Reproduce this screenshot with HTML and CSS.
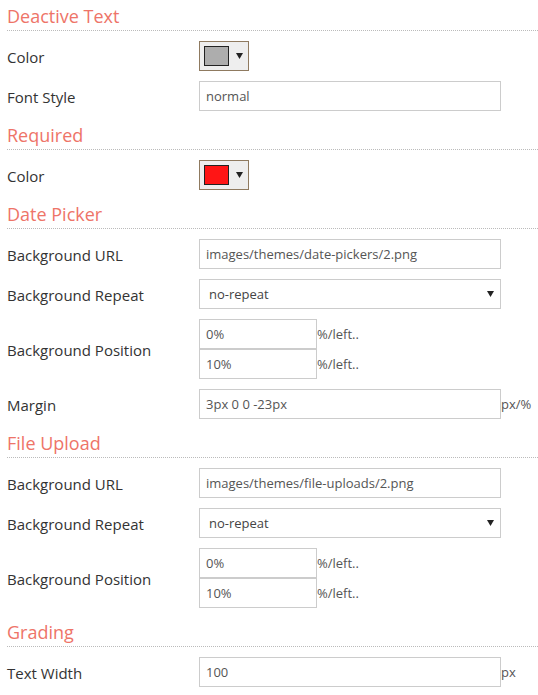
FILE: index.html
```html
<!DOCTYPE html>
<html>
<head>
<meta charset="utf-8">
<link rel="stylesheet" href="styles.css">
</head>
<body>
<div class="page">
  <h3 class="sec first">Deactive Text</h3>
  <div class="row">
    <div class="label">Color</div>
    <div class="ctrl">
      <div class="picker"><span class="swatch gray"></span><svg class="tri" width="7" height="6" viewBox="0 0 7 6"><path d="M0 0H7L3.5 6Z" fill="#222"/></svg></div>
    </div>
  </div>
  <div class="row">
    <div class="label">Font Style</div>
    <div class="ctrl"><input class="inp wide" value="normal"></div>
  </div>

  <h3 class="sec">Required</h3>
  <div class="row">
    <div class="label">Color</div>
    <div class="ctrl">
      <div class="picker"><span class="swatch red"></span><svg class="tri" width="7" height="6" viewBox="0 0 7 6"><path d="M0 0H7L3.5 6Z" fill="#222"/></svg></div>
    </div>
  </div>

  <h3 class="sec">Date Picker</h3>
  <div class="row">
    <div class="label">Background URL</div>
    <div class="ctrl"><input class="inp wide" value="images/themes/date-pickers/2.png"></div>
  </div>
  <div class="row">
    <div class="label">Background Repeat</div>
    <div class="ctrl"><div class="select wide"><span>no-repeat</span><svg width="7" height="6" viewBox="0 0 7 6"><path d="M0 0H7L3.5 6Z" fill="#222"/></svg></div></div>
  </div>
  <div class="row">
    <div class="label">Background Position</div>
    <div class="ctrl stack">
      <div class="pair"><input class="inp short" value="0%"><span class="unit">%/left..</span></div>
      <div class="pair"><input class="inp short" value="10%"><span class="unit">%/left..</span></div>
    </div>
  </div>
  <div class="row">
    <div class="label">Margin</div>
    <div class="ctrl"><input class="inp wide" value="3px 0 0 -23px"><span class="unit">px/%</span></div>
  </div>

  <h3 class="sec">File Upload</h3>
  <div class="row">
    <div class="label">Background URL</div>
    <div class="ctrl"><input class="inp wide" value="images/themes/file-uploads/2.png"></div>
  </div>
  <div class="row">
    <div class="label">Background Repeat</div>
    <div class="ctrl"><div class="select wide"><span>no-repeat</span><svg width="7" height="6" viewBox="0 0 7 6"><path d="M0 0H7L3.5 6Z" fill="#222"/></svg></div></div>
  </div>
  <div class="row">
    <div class="label">Background Position</div>
    <div class="ctrl stack">
      <div class="pair"><input class="inp short" value="0%"><span class="unit">%/left..</span></div>
      <div class="pair"><input class="inp short" value="10%"><span class="unit">%/left..</span></div>
    </div>
  </div>

  <h3 class="sec">Grading</h3>
  <div class="row">
    <div class="label">Text Width</div>
    <div class="ctrl"><input class="inp wide" value="100"><span class="unit">px</span></div>
  </div>
</div>
</body>
</html>
```

FILE: styles.css
```css
html, body {
  margin: 0;
  padding: 0;
  background: #fff;
}
body {
  font-family: "Open Sans", "Liberation Sans", sans-serif;
  color: #333;
}
.page {
  padding: 2px 0 0 7px;
}
.sec {
  margin: 10px 0 10px 0;
  padding: 2px 0 2px 0;
  font-size: 18px;
  line-height: 24px;
  font-weight: 400;
  color: #ee7468;
  border-bottom: 1px dotted #bbb;
}
.sec.first {
  margin-top: 0;
}
.row {
  display: flex;
  align-items: center;
  margin-bottom: 10px;
}
.label {
  width: 192px;
  flex: none;
  font-size: 15px;
  line-height: 20px;
  padding-top: 2px;
  color: #333;
}
.ctrl {
  display: flex;
  align-items: center;
}
.ctrl.stack {
  flex-direction: column;
  align-items: flex-start;
}
.pair {
  display: flex;
  align-items: center;
}
.inp {
  box-sizing: border-box;
  height: 30px;
  margin: 0;
  padding: 0 6px;
  border: 1px solid #ccc;
  border-radius: 0;
  font-family: "Open Sans", "Liberation Sans", sans-serif;
  font-size: 13px;
  color: #555;
  background: #fff;
  outline: none;
}
.wide {
  width: 302px;
}
.short {
  width: 118px;
}
.unit {
  font-size: 13px;
  color: #555;
}
.select {
  box-sizing: border-box;
  height: 30px;
  border: 1px solid #ccc;
  display: flex;
  align-items: center;
  justify-content: space-between;
  padding: 0 6px 0 9px;
  font-size: 13px;
  color: #444;
  background: #fff;
}
.picker {
  box-sizing: border-box;
  width: 50px;
  height: 30px;
  border: 1px solid #8f7a60;
  background: #eee;
  display: flex;
  align-items: center;
  padding-left: 4px;
}
.swatch {
  box-sizing: border-box;
  width: 25px;
  height: 20px;
  border: 1px solid #222;
}
.swatch.gray {
  background: #adadad;
}
.swatch.red {
  background: #ff1515;
}
.tri {
  margin-left: 7px;
}
```
